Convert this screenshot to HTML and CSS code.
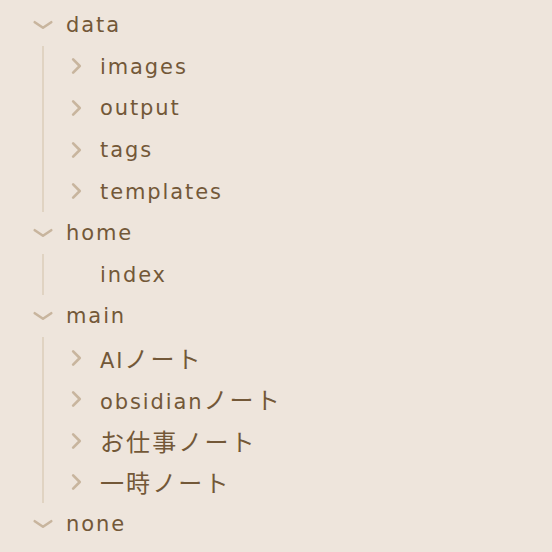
FILE: index.html
```html
<!DOCTYPE html>
<html lang="ja">
<head>
<meta charset="utf-8">
<link rel="stylesheet" href="styles.css">
</head>
<body>
<div class="tree">
  <div class="node">
    <div class="row"><span class="icon"><svg class="chev" viewBox="0 0 20 20"><polyline points="2.5,7.5 10,12.5 17.5,7.5"/></svg></span><span class="label">data</span></div>
    <div class="children">
      <div class="row"><span class="icon"><svg class="chev" viewBox="0 0 20 20"><polyline points="6.5,4 12.5,10 6.5,16"/></svg></span><span class="label">images</span></div>
      <div class="row"><span class="icon"><svg class="chev" viewBox="0 0 20 20"><polyline points="6.5,4 12.5,10 6.5,16"/></svg></span><span class="label">output</span></div>
      <div class="row"><span class="icon"><svg class="chev" viewBox="0 0 20 20"><polyline points="6.5,4 12.5,10 6.5,16"/></svg></span><span class="label">tags</span></div>
      <div class="row"><span class="icon"><svg class="chev" viewBox="0 0 20 20"><polyline points="6.5,4 12.5,10 6.5,16"/></svg></span><span class="label">templates</span></div>
    </div>
  </div>
  <div class="node">
    <div class="row"><span class="icon"><svg class="chev" viewBox="0 0 20 20"><polyline points="2.5,7.5 10,12.5 17.5,7.5"/></svg></span><span class="label">home</span></div>
    <div class="children">
      <div class="row"><span class="icon"></span><span class="label">index</span></div>
    </div>
  </div>
  <div class="node">
    <div class="row"><span class="icon"><svg class="chev" viewBox="0 0 20 20"><polyline points="2.5,7.5 10,12.5 17.5,7.5"/></svg></span><span class="label">main</span></div>
    <div class="children">
      <div class="row"><span class="icon"><svg class="chev" viewBox="0 0 20 20"><polyline points="6.5,4 12.5,10 6.5,16"/></svg></span><span class="label">AI<span class="ja">ノート</span></span></div>
      <div class="row"><span class="icon"><svg class="chev" viewBox="0 0 20 20"><polyline points="6.5,4 12.5,10 6.5,16"/></svg></span><span class="label">obsidian<span class="ja">ノート</span></span></div>
      <div class="row"><span class="icon"><svg class="chev" viewBox="0 0 20 20"><polyline points="6.5,4 12.5,10 6.5,16"/></svg></span><span class="label"><span class="ja">お仕事ノート</span></span></div>
      <div class="row"><span class="icon"><svg class="chev" viewBox="0 0 20 20"><polyline points="6.5,4 12.5,10 6.5,16"/></svg></span><span class="label"><span class="ja">一時ノート</span></span></div>
    </div>
  </div>
  <div class="node">
    <div class="row"><span class="icon"><svg class="chev" viewBox="0 0 20 20"><polyline points="2.5,7.5 10,12.5 17.5,7.5"/></svg></span><span class="label">none</span></div>
  </div>
</div>
</body>
</html>
```
FILE: styles.css
```css
html, body {
  margin: 0;
  padding: 0;
  background: #eee5dc;
}
body {
  width: 552px;
  height: 552px;
  overflow: hidden;
}
.tree {
  padding-top: 4px;
  font-family: "DejaVu Sans", "Noto Sans CJK JP", sans-serif;
  color: #735838;
}
.row {
  height: 41.6px;
  display: flex;
  align-items: center;
  padding-left: 31px;
  gap: 11px;
}
.children .row {
  padding-left: 21px;
}
.children {
  margin-left: 42px;
  border-left: 2px solid #e0d3c2;
}
.icon {
  width: 24px;
  height: 24px;
  display: flex;
  align-items: center;
  justify-content: center;
  flex: none;
}
.chev {
  width: 22px;
  height: 22px;
  fill: none;
  stroke: #c8b59e;
  stroke-width: 2.4;
  stroke-linecap: round;
  stroke-linejoin: round;
}
.label {
  font-size: 21px;
  letter-spacing: 1.9px;
  line-height: 1;
  white-space: nowrap;
  position: relative;
  top: 1px;
}
.ja {
  font-family: "Noto Sans CJK JP", sans-serif;
  font-size: 24px;
  font-weight: 400;
  letter-spacing: 2.1px;
}
```
